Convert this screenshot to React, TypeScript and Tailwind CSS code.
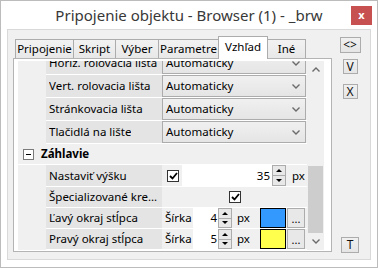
import React from "react";

const Chevron = ({ up = false }: { up?: boolean }) => (
    <svg width="8" height="5" viewBox="0 0 8 5" className="block">
        <path d={up ? "M0.5 4.5 L4 1 L7.5 4.5" : "M0.5 0.5 L4 4 L7.5 0.5"} fill="none" stroke="#6b6b6b" strokeWidth="1.4" />
    </svg>
);

const Check = ({ className = "" }: { className?: string }) => (
    <div className={`w-[12px] h-[12px] border border-[#333] bg-white flex items-center justify-center ${className}`}>
        <svg width="9" height="8" viewBox="0 0 9 8">
            <path d="M1 4 L3.5 6.5 L8 1" fill="none" stroke="#000" strokeWidth="1.8" />
        </svg>
    </div>
);

const Spin = () => (
    <div className="flex flex-col w-[14px] h-full">
        <div className="flex-1 border border-[#acacac] bg-[#e8e8e8] flex items-center justify-center">
            <div className="w-0 h-0 border-x-[3px] border-x-transparent border-b-[3px] border-b-black" />
        </div>
        <div className="flex-1 border border-t-0 border-[#acacac] bg-[#e8e8e8] flex items-center justify-center">
            <div className="w-0 h-0 border-x-[3px] border-x-transparent border-t-[3px] border-t-black" />
        </div>
    </div>
);

const Combo = () => (
    <div className="h-full w-[144px] border border-[#acacac] bg-linear-to-b from-[#f0f0f0] to-[#e5e5e5] flex items-center justify-between pl-[3px] pr-[5px]">
        <span>Automaticky</span>
        <Chevron />
    </div>
);

const Row = ({ label, h, children }: { label: string; h: string; children?: React.ReactNode }) => (
    <div className={`flex ${h}`}>
        <div className="w-[28px] bg-[#f0f0f0]" />
        <div className="flex flex-1 border-b border-white">
            <div className="w-[116px] bg-[#e4e4e4] pl-[3px] pr-[1px] flex items-center">
                <span className="truncate leading-[16px]">{label}</span>
            </div>
            <div className="flex-1 bg-[#f0f0f0] flex items-center">{children}</div>
        </div>
    </div>
);

const tabs = [
    { name: "Pripojenie", w: "w-[59px]" },
    { name: "Skript", w: "w-[43px]" },
    { name: "Výber", w: "w-[44px]" },
    { name: "Parametre", w: "w-[61px]" },
    { name: "Vzhľad", w: "w-[50px]", active: true },
    { name: "Iné", w: "w-[39px]" },
];

const SideButton = ({ text, w, className = "" }: { text: string; w: string; className?: string }) => (
    <div className={`${w} border border-[#acacac] bg-linear-to-b from-[#f0f0f0] to-[#e5e5e5] flex items-center justify-center text-[#111] text-[12px] ${className}`}>
        {text}
    </div>
);

const ColorRow = ({ label, value, color }: { label: string; value: string; color: string }) => (
    <Row label={label} h="h-[21px]">
        <span className="pl-[3px] w-[31px]">Šírka</span>
        <div className="w-[25px] h-full bg-white flex items-center justify-end pr-[1px]">{value}</div>
        <Spin />
        <span className="ml-[5px] w-[23px]">px</span>
        <div className={`w-[26px] h-full border border-black ${color}`} />
        <div className="ml-[1px] w-[18px] h-full border border-[#acacac] bg-[#e8e8e8] flex items-end justify-center pb-[3px] text-[11px] leading-none">...</div>
    </Row>
);

export default function App() {
    return (
        <div className="w-[378px] h-[268px] bg-white border border-[#bcbcbc] flex flex-col font-['Noto_Sans',sans-serif] text-[11.5px] leading-none text-black overflow-hidden">
            <div className="h-[28px] relative flex items-center justify-center">
                <span className="text-[15px] text-[#383838] mt-[1px]">Pripojenie objektu - Browser (1) - _brw</span>
                <div className="absolute right-[5px] top-[5px] w-[21px] h-[19px] bg-[#c75050] text-white font-bold text-[11px] flex items-center justify-center pb-[2px]">
                    x
                </div>
            </div>
            <div className="mx-[6px] mb-[7px] flex-1 border border-[#d9d9d9] bg-[#f0f0f0] flex">
                <div className="pl-[5px] pt-[6px] pb-[7px] flex flex-col w-[324px]">
                    <div className="flex items-end pl-[2px] h-[22px] relative z-10">
                        {tabs.map((t) =>
                            t.active ? (
                                <div key={t.name} className={`${t.w} -ml-px h-[23px] -mb-px border border-b-0 border-[#acacac] bg-white flex justify-center pt-[4px]`}>
                                    {t.name}
                                </div>
                            ) : (
                                <div key={t.name} className={`${t.w} -ml-px first:ml-0 h-[19px] border border-b-0 border-[#acacac] bg-linear-to-b from-[#f2f2f2] to-[#e8e8e8] flex items-center justify-center`}>
                                    {t.name}
                                </div>
                            )
                        )}
                    </div>
                    <div className="w-[319px] h-[194px] border border-[#b4b4b4] bg-white pl-[4px] pt-[2px] pr-[6px] flex">
                        <div className="w-[289px] h-[189px] overflow-hidden">
                            <div className="-mt-[9px]">
                                {["Horiz. rolovacia lišta", "Vert. rolovacia lišta", "Stránkovacia lišta", "Tlačidlá na lište"].map((l) => (
                                    <Row key={l} label={l} h="h-[23px]">
                                        <Combo />
                                    </Row>
                                ))}
                                <div className="h-[21px] bg-[#f0f0f0] flex items-center pl-[5px] border-b border-white">
                                    <div className="w-[11px] h-[11px] border border-[#7a7a7a] bg-white flex items-center justify-center">
                                        <div className="w-[5px] h-px bg-black" />
                                    </div>
                                    <span className="ml-[7px] font-bold">Záhlavie</span>
                                </div>
                                <Row label="Nastaviť výšku" h="h-[22px]">
                                    <Check className="ml-[5px]" />
                                    <div className="ml-[3px] w-[90px] h-full bg-white flex items-center justify-end pr-[2px]">35</div>
                                    <Spin />
                                    <span className="ml-[6px]">px</span>
                                </Row>
                                <Row label="Špecializované kreslenie" h="h-[21px]">
                                    <Check className="ml-[67px]" />
                                </Row>
                                <ColorRow label="Ľavý okraj stĺpca" value="4" color="bg-[#3399ff]" />
                                <ColorRow label="Pravý okraj stĺpca" value="5" color="bg-[#ffff4d]" />
                            </div>
                        </div>
                        <div className="w-[17px] h-[189px] bg-[#f0f0f0] flex flex-col">
                            <div className="h-[17px] flex items-center justify-center">
                                <Chevron up />
                            </div>
                            <div className="flex-1 flex flex-col justify-end items-center">
                                <div className="w-[15px] h-[67px] bg-[#cdcdcd]" />
                            </div>
                            <div className="h-[17px] flex items-center justify-center">
                                <Chevron />
                            </div>
                        </div>
                    </div>
                </div>
                <div className="flex-1 flex flex-col items-center pr-[2px] pt-[7px] pb-[6px]">
                    <SideButton text="<>" w="w-[21px] h-[16px]" className="text-[#1a237e]" />
                    <SideButton text="V" w="w-[15px] h-[15px] mt-[6px]" className="text-[#1a3a9e]" />
                    <SideButton text="X" w="w-[15px] h-[15px] mt-[10px]" />
                    <div className="flex-1" />
                    <SideButton text="T" w="w-[18px] h-[16px]" />
                </div>
            </div>
        </div>
    );
}
